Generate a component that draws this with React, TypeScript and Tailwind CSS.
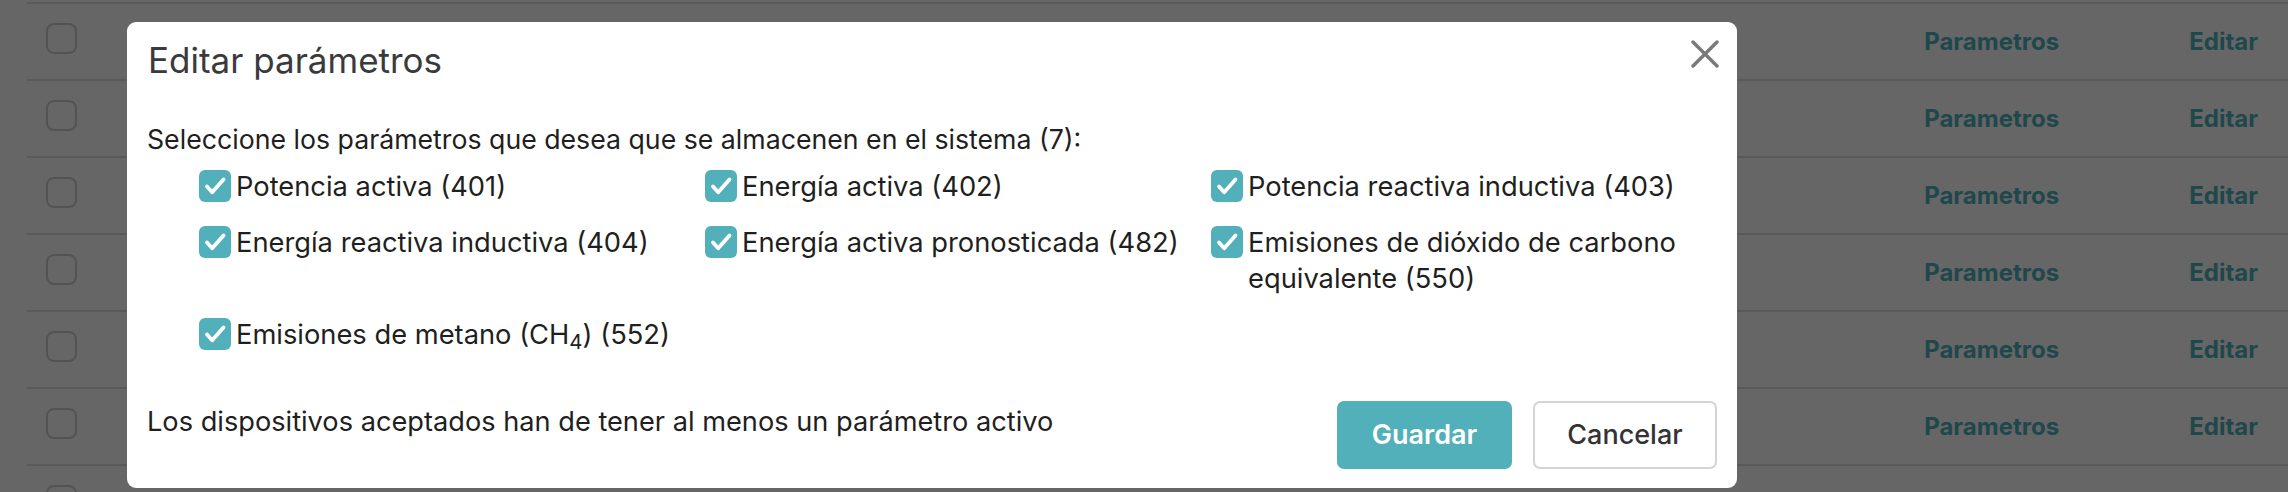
import React, { useState } from 'react';

type Param = { id: number; label: React.ReactNode };

const PARAMS: Param[] = [
  { id: 401, label: 'Potencia activa (401)' },
  { id: 402, label: 'Energía activa (402)' },
  { id: 403, label: 'Potencia reactiva inductiva (403)' },
  { id: 404, label: 'Energía reactiva inductiva (404)' },
  { id: 482, label: 'Energía activa pronosticada (482)' },
  { id: 550, label: 'Emisiones de dióxido de carbono equivalente (550)' },
  {
    id: 552,
    label: (
      <>
        Emisiones de metano (CH<sub>4</sub>) (552)
      </>
    ),
  },
];

const CheckIcon = () => (
  <svg viewBox="0 0 32 32" className="w-[32px] h-[32px]">
    <path d="M8 16.5l5.2 5.8L24.5 9.5" fill="none" stroke="white" strokeWidth="3.8" strokeLinecap="round" strokeLinejoin="round" />
  </svg>
);

const TableRow = ({ links = true }: { links?: boolean }) => (
  <div className="h-[77px] border-t-2 border-[#e2e2e2] ml-[27px] flex items-center">
    <span className="ml-[19px] w-[31px] h-[31px] rounded-[8px] border-2 border-[#cfcfcf] -mt-[6px]"></span>
    <div className="flex-1"></div>
    {links && (
      <>
        <a href="#" className="text-[24px] font-bold text-[#4fb3bd] w-[138px]">Parametros</a>
        <a href="#" className="ml-[127px] mr-[30px] text-[24px] font-bold text-[#4fb3bd]">Editar</a>
      </>
    )}
  </div>
);

export default function App() {
  const [checked, setChecked] = useState<number[]>(PARAMS.map((p) => p.id));

  const toggle = (id: number) =>
    setChecked((c) => (c.includes(id) ? c.filter((x) => x !== id) : [...c, id]));

  return (
    <div className="relative h-[492px] w-full overflow-hidden bg-white font-['Inter',sans-serif]">
      {/* table behind the modal */}
      <div className="pt-[2px]">
        {Array.from({ length: 6 }).map((_, i) => (
          <TableRow key={i} />
        ))}
        <TableRow links={false} />
      </div>

      {/* overlay + modal */}
      <div className="fixed inset-0 bg-black/60 flex items-start pl-[127px] pt-[22px]">
        <div className="w-[1610px] h-[466px] bg-white rounded-[9px] px-[20px] pt-[18px] relative">
          <button className="absolute right-[18px] top-[18px] w-[28px] h-[28px] text-[#7a7a7a]">
            <svg viewBox="0 0 28 28" className="w-[28px] h-[28px]">
              <path d="M2 2L26 26M26 2L2 26" stroke="currentColor" strokeWidth="3.5" strokeLinecap="round" />
            </svg>
          </button>

          <h2 className="text-[35px] leading-[41px] text-[#3a3a3c] pl-[1px]">Editar parámetros</h2>

          <p className="mt-[40px] text-[26.7px] leading-[36px] text-[#1f1f21]">
            Seleccione los parámetros que desea que se almacenen en el sistema ({checked.length}):
          </p>

          <div className="mt-[12px] pl-[52px] grid grid-cols-3 gap-y-[20px]">
            {PARAMS.map((p) => {
              const on = checked.includes(p.id);
              return (
                <label key={p.id} className="flex items-start gap-[5px] cursor-pointer">
                  <span
                    onClick={() => toggle(p.id)}
                    className={`mt-[1px] shrink-0 w-[32px] h-[32px] rounded-[6px] ${on ? 'bg-[#52b0ba]' : 'bg-white border-2 border-[#cfcfcf]'}`}
                  >
                    {on && <CheckIcon />}
                  </span>
                  <span className="text-[27.3px] leading-[36px] text-[#1f1f21] pr-[30px]">{p.label}</span>
                </label>
              );
            })}
          </div>

          <div className="mt-[48px] flex items-start justify-between">
            <p className="mt-[3px] text-[27.2px] leading-[36px] text-[#1f1f21]">
              Los dispositivos aceptados han de tener al menos un parámetro activo
            </p>
            <div className="flex gap-[21px]">
              <button className="h-[68px] w-[175px] rounded-[7px] bg-[#52b0ba] text-white text-[27px] font-semibold">
                Guardar
              </button>
              <button className="h-[68px] w-[184px] rounded-[7px] border-2 border-[#d3d3d8] bg-white text-[#333336] text-[27px] font-medium">
                Cancelar
              </button>
            </div>
          </div>
        </div>
      </div>
    </div>
  );
}
